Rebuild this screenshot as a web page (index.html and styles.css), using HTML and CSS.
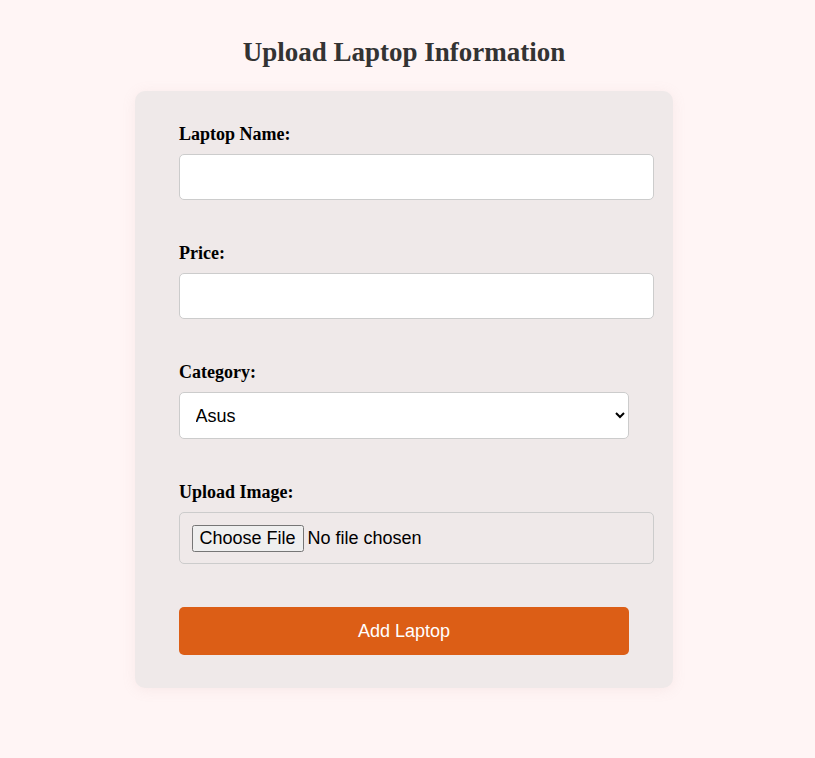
FILE: index.html
```html
<!DOCTYPE html>
<html lang="en">
<head>
<meta charset="utf-8">
<title>Upload Laptop Information</title>
<link rel="stylesheet" href="styles.css">
</head>
<body>
  <h2 class="title">Upload Laptop Information</h2>
  <form class="card">
    <div class="group">
      <label class="label" for="name">Laptop Name:</label>
      <input class="field" type="text" id="name">
    </div>
    <div class="group">
      <label class="label" for="price">Price:</label>
      <input class="field" type="text" id="price">
    </div>
    <div class="group">
      <label class="label" for="cat">Category:</label>
      <select class="select" id="cat">
        <option>Asus</option>
        <option>Dell</option>
        <option>HP</option>
        <option>Lenovo</option>
      </select>
    </div>
    <div class="group">
      <label class="label" for="img">Upload Image:</label>
      <input class="field file" type="file" id="img">
    </div>
    <button class="submit" type="button">Add Laptop</button>
  </form>
</body>
</html>
```
FILE: styles.css
```css
html, body {
  margin: 0;
}
body {
  background: #fff5f5;
  padding: 37px 7px 40px 0;
  font-family: "Liberation Serif", "Times New Roman", serif;
}
.title {
  margin: 0 0 23px;
  text-align: center;
  font-size: 27px;
  font-weight: bold;
  color: #333;
}
.card {
  width: 450px;
  margin: 0 auto;
  padding: 32px 44px 33px;
  background: #efe9e9;
  border-radius: 10px;
  box-shadow: 0 2px 14px rgba(200, 150, 150, 0.12);
}
.group {
  margin-bottom: 42px;
}
.group:last-of-type {
  margin-bottom: 43px;
}
.label {
  display: block;
  padding-top: 1px;
  margin-bottom: 9px;
  font-size: 18px;
  font-weight: bold;
  color: #000;
}
.field {
  display: block;
  width: 100%;
  padding: 11.5px;
  border: 1px solid #ccc;
  border-radius: 5px;
  font-family: "Liberation Sans", Arial, sans-serif;
  font-size: 18px;
  background: #fff;
  margin: 0;
}
.file {
  background: transparent;
}
.select {
  display: block;
  width: 100%;
  padding: 11.5px;
  border: 1px solid #ccc;
  border-radius: 5px;
  font-family: "Liberation Sans", Arial, sans-serif;
  font-size: 18px;
  background: #fff;
  color: #000;
  margin: 0;
}
.submit {
  display: block;
  width: 100%;
  padding: 13.5px;
  border: none;
  border-radius: 5px;
  background: #dc5e16;
  color: #fff;
  font-family: "Liberation Sans", Arial, sans-serif;
  font-size: 18px;
  cursor: pointer;
}
```
